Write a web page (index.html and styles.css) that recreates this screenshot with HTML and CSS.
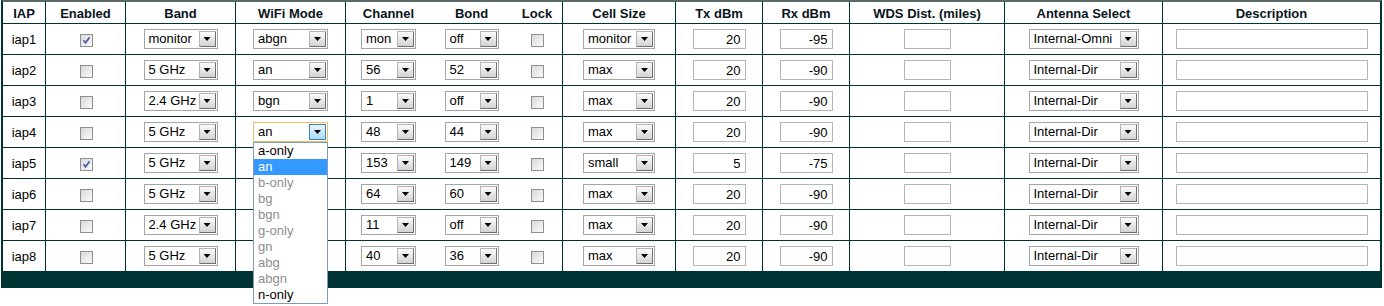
FILE: index.html
```html
<!DOCTYPE html>
<html>

<head>
    <title>IAP Settings</title>
    <meta http-equiv="Content-Type" content="text/html; charset=utf-8">
    <link rel="stylesheet" href="styles.css">
</head>

<body>
    <div class="panel">
        <table class="iaps">
            <thead>
                <tr>
                    <th class="c-iap">IAP</th>
                    <th class="c-en">Enabled</th>
                    <th class="c-band">Band</th>
                    <th class="c-mode">WiFi Mode</th>
                    <th class="c-chan nb">Channel</th>
                    <th class="c-bond nb">Bond</th>
                    <th class="c-lock">Lock</th>
                    <th class="c-cell">Cell Size</th>
                    <th class="c-tx">Tx dBm</th>
                    <th class="c-rx">Rx dBm</th>
                    <th class="c-wds">WDS Dist. (miles)</th>
                    <th class="c-ant">Antenna Select</th>
                    <th class="c-desc nb">Description</th>
                </tr>
            </thead>
            <tbody>
                <tr>
                    <td>iap1</td>
                    <td><span class="chk on"><svg width="11" height="11" viewBox="0 0 11 11"><path d="M2.5 5.2 L4.6 7.8 L8.6 2.2" fill="none" stroke="#4a5ea4" stroke-width="1.8"/></svg></span></td>
                    <td><span class="sel w-band"><span class="val">monitor</span><span class="btn"></span></span></td>
                    <td><span class="sel w-mode"><span class="val">abgn</span><span class="btn"></span></span></td>
                    <td class="nb"><span class="sel w-chan"><span class="val">mon</span><span class="btn"></span></span></td>
                    <td class="nb"><span class="sel w-bond"><span class="val">off</span><span class="btn"></span></span></td>
                    <td><span class="chk"></span></td>
                    <td><span class="sel w-cell"><span class="val">monitor</span><span class="btn"></span></span></td>
                    <td><input class="num" type="text" value="20"></td>
                    <td><input class="num" type="text" value="-95"></td>
                    <td><input class="wds" type="text" value=""></td>
                    <td><span class="sel w-ant"><span class="val">Internal-Omni</span><span class="btn"></span></span></td>
                    <td class="nb"><input class="desc" type="text" value=""></td>
                </tr>
                <tr>
                    <td>iap2</td>
                    <td><span class="chk"></span></td>
                    <td><span class="sel w-band"><span class="val">5 GHz</span><span class="btn"></span></span></td>
                    <td><span class="sel w-mode"><span class="val">an</span><span class="btn"></span></span></td>
                    <td class="nb"><span class="sel w-chan"><span class="val">56</span><span class="btn"></span></span></td>
                    <td class="nb"><span class="sel w-bond"><span class="val">52</span><span class="btn"></span></span></td>
                    <td><span class="chk"></span></td>
                    <td><span class="sel w-cell"><span class="val">max</span><span class="btn"></span></span></td>
                    <td><input class="num" type="text" value="20"></td>
                    <td><input class="num" type="text" value="-90"></td>
                    <td><input class="wds" type="text" value=""></td>
                    <td><span class="sel w-ant"><span class="val">Internal-Dir</span><span class="btn"></span></span></td>
                    <td class="nb"><input class="desc" type="text" value=""></td>
                </tr>
                <tr>
                    <td>iap3</td>
                    <td><span class="chk"></span></td>
                    <td><span class="sel w-band"><span class="val">2.4 GHz</span><span class="btn"></span></span></td>
                    <td><span class="sel w-mode"><span class="val">bgn</span><span class="btn"></span></span></td>
                    <td class="nb"><span class="sel w-chan"><span class="val">1</span><span class="btn"></span></span></td>
                    <td class="nb"><span class="sel w-bond"><span class="val">off</span><span class="btn"></span></span></td>
                    <td><span class="chk"></span></td>
                    <td><span class="sel w-cell"><span class="val">max</span><span class="btn"></span></span></td>
                    <td><input class="num" type="text" value="20"></td>
                    <td><input class="num" type="text" value="-90"></td>
                    <td><input class="wds" type="text" value=""></td>
                    <td><span class="sel w-ant"><span class="val">Internal-Dir</span><span class="btn"></span></span></td>
                    <td class="nb"><input class="desc" type="text" value=""></td>
                </tr>
                <tr>
                    <td>iap4</td>
                    <td><span class="chk"></span></td>
                    <td><span class="sel w-band"><span class="val">5 GHz</span><span class="btn"></span></span></td>
                    <td>
                        <span class="sel w-mode open"><span class="val">an</span><span class="btn"></span>
                            <span class="list">
                                <span class="opt">a-only</span>
                                <span class="opt hl">an</span>
                                <span class="opt dis">b-only</span>
                                <span class="opt dis">bg</span>
                                <span class="opt dis">bgn</span>
                                <span class="opt dis">g-only</span>
                                <span class="opt dis">gn</span>
                                <span class="opt dis">abg</span>
                                <span class="opt dis">abgn</span>
                                <span class="opt">n-only</span>
                            </span>
                        </span>
                    </td>
                    <td class="nb"><span class="sel w-chan"><span class="val">48</span><span class="btn"></span></span></td>
                    <td class="nb"><span class="sel w-bond"><span class="val">44</span><span class="btn"></span></span></td>
                    <td><span class="chk"></span></td>
                    <td><span class="sel w-cell"><span class="val">max</span><span class="btn"></span></span></td>
                    <td><input class="num" type="text" value="20"></td>
                    <td><input class="num" type="text" value="-90"></td>
                    <td><input class="wds" type="text" value=""></td>
                    <td><span class="sel w-ant"><span class="val">Internal-Dir</span><span class="btn"></span></span></td>
                    <td class="nb"><input class="desc" type="text" value=""></td>
                </tr>
                <tr>
                    <td>iap5</td>
                    <td><span class="chk on"><svg width="11" height="11" viewBox="0 0 11 11"><path d="M2.5 5.2 L4.6 7.8 L8.6 2.2" fill="none" stroke="#4a5ea4" stroke-width="1.8"/></svg></span></td>
                    <td><span class="sel w-band"><span class="val">5 GHz</span><span class="btn"></span></span></td>
                    <td><span class="sel w-mode"><span class="val"></span><span class="btn"></span></span></td>
                    <td class="nb"><span class="sel w-chan"><span class="val">153</span><span class="btn"></span></span></td>
                    <td class="nb"><span class="sel w-bond"><span class="val">149</span><span class="btn"></span></span></td>
                    <td><span class="chk"></span></td>
                    <td><span class="sel w-cell"><span class="val">small</span><span class="btn"></span></span></td>
                    <td><input class="num" type="text" value="5"></td>
                    <td><input class="num" type="text" value="-75"></td>
                    <td><input class="wds" type="text" value=""></td>
                    <td><span class="sel w-ant"><span class="val">Internal-Dir</span><span class="btn"></span></span></td>
                    <td class="nb"><input class="desc" type="text" value=""></td>
                </tr>
                <tr>
                    <td>iap6</td>
                    <td><span class="chk"></span></td>
                    <td><span class="sel w-band"><span class="val">5 GHz</span><span class="btn"></span></span></td>
                    <td><span class="sel w-mode"><span class="val"></span><span class="btn"></span></span></td>
                    <td class="nb"><span class="sel w-chan"><span class="val">64</span><span class="btn"></span></span></td>
                    <td class="nb"><span class="sel w-bond"><span class="val">60</span><span class="btn"></span></span></td>
                    <td><span class="chk"></span></td>
                    <td><span class="sel w-cell"><span class="val">max</span><span class="btn"></span></span></td>
                    <td><input class="num" type="text" value="20"></td>
                    <td><input class="num" type="text" value="-90"></td>
                    <td><input class="wds" type="text" value=""></td>
                    <td><span class="sel w-ant"><span class="val">Internal-Dir</span><span class="btn"></span></span></td>
                    <td class="nb"><input class="desc" type="text" value=""></td>
                </tr>
                <tr>
                    <td>iap7</td>
                    <td><span class="chk"></span></td>
                    <td><span class="sel w-band"><span class="val">2.4 GHz</span><span class="btn"></span></span></td>
                    <td><span class="sel w-mode"><span class="val"></span><span class="btn"></span></span></td>
                    <td class="nb"><span class="sel w-chan"><span class="val">11</span><span class="btn"></span></span></td>
                    <td class="nb"><span class="sel w-bond"><span class="val">off</span><span class="btn"></span></span></td>
                    <td><span class="chk"></span></td>
                    <td><span class="sel w-cell"><span class="val">max</span><span class="btn"></span></span></td>
                    <td><input class="num" type="text" value="20"></td>
                    <td><input class="num" type="text" value="-90"></td>
                    <td><input class="wds" type="text" value=""></td>
                    <td><span class="sel w-ant"><span class="val">Internal-Dir</span><span class="btn"></span></span></td>
                    <td class="nb"><input class="desc" type="text" value=""></td>
                </tr>
                <tr>
                    <td>iap8</td>
                    <td><span class="chk"></span></td>
                    <td><span class="sel w-band"><span class="val">5 GHz</span><span class="btn"></span></span></td>
                    <td><span class="sel w-mode"><span class="val"></span><span class="btn"></span></span></td>
                    <td class="nb"><span class="sel w-chan"><span class="val">40</span><span class="btn"></span></span></td>
                    <td class="nb"><span class="sel w-bond"><span class="val">36</span><span class="btn"></span></span></td>
                    <td><span class="chk"></span></td>
                    <td><span class="sel w-cell"><span class="val">max</span><span class="btn"></span></span></td>
                    <td><input class="num" type="text" value="20"></td>
                    <td><input class="num" type="text" value="-90"></td>
                    <td><input class="wds" type="text" value=""></td>
                    <td><span class="sel w-ant"><span class="val">Internal-Dir</span><span class="btn"></span></span></td>
                    <td class="nb"><input class="desc" type="text" value=""></td>
                </tr>
            </tbody>
        </table>
        <div class="foot"></div>
    </div>
</body>

</html>
```

FILE: styles.css
```css
html,
body {
    min-height: 306px;
}

body {
    margin: 0;
    background-color: white;
    color: black;
    font-family: "Liberation Sans", Arial, sans-serif;
    font-size: 13px;
}

.panel {
    width: 1381px;
    margin-left: 1px;
}

.iaps {
    width: 1381px;
    box-sizing: border-box;
    table-layout: fixed;
    border-spacing: 0;
    border-top: 2px solid #5b6868;
    border-left: 2px solid #003333;
    border-right: 2px solid #003333;
}

.iaps th,
.iaps td {
    box-sizing: border-box;
    padding: 0;
    text-align: center;
    vertical-align: middle;
    border-right: 1px solid #003333;
    border-bottom: 1px solid #003333;
    white-space: nowrap;
}

.iaps th {
    height: 22px;
    padding-top: 1px;
    font-weight: bold;
    color: #0a1420;
}

.iaps td {
    height: 31px;
}

.iaps .nb {
    border-right: none;
}

/* column widths, border included */
.c-iap { width: 43px; }
.c-en { width: 80px; }
.c-band { width: 110px; }
.c-mode { width: 110px; }
.c-chan { width: 85px; }
.c-bond { width: 81px; }
.c-lock { width: 51px; }
.c-cell { width: 113px; }
.c-tx { width: 87px; }
.c-rx { width: 87px; }
.c-wds { width: 155px; }
.c-ant { width: 158px; }
.c-desc { width: 217px; }

.foot {
    height: 16px;
    background-color: #003333;
}

/* fake select boxes */
.sel {
    position: relative;
    display: inline-flex;
    align-items: center;
    height: 20px;
    box-sizing: border-box;
    border: 1px solid #a5a5a5;
    background-color: white;
    vertical-align: middle;
    text-align: left;
}

.sel .val {
    flex: 1;
    padding-left: 4px;
    line-height: 18px;
    height: 18px;
    overflow: hidden;
}

.sel .btn {
    display: flex;
    align-items: center;
    justify-content: center;
    width: 17px;
    height: 16px;
    margin-right: 1px;
    box-sizing: border-box;
    border: 1px solid;
    border-color: #b4b4b4 #707070 #707070 #b4b4b4;
    background: linear-gradient(#fbfbfb, #d3d3d3);
}

.sel .btn::after {
    content: "";
    width: 7px;
    height: 4px;
    background-color: black;
    clip-path: polygon(0 0, 100% 0, 50% 100%);
}

.w-band { width: 74px; }
.w-mode { width: 75px; }
.w-chan { width: 55px; }
.w-bond { width: 54px; }
.w-cell { width: 72px; }
.w-ant { width: 110px; }

.sel.open {
    border-color: #e5c365;
}

.sel.open .btn {
    border-color: #3c7fb1;
    background: linear-gradient(#eaf6fd, #a9daf5);
}

.list {
    position: absolute;
    z-index: 10;
    top: calc(100% + 1px);
    left: -1px;
    width: 75px;
    box-sizing: border-box;
    border: 1px solid #7f9db9;
    background-color: white;
}

.opt {
    display: block;
    height: 16px;
    line-height: 16px;
    padding-left: 4px;
}

.opt.dis {
    color: #8d8d8d;
}

.opt.hl {
    background-color: #3399ff;
    color: white;
}

/* checkboxes */
.chk {
    display: inline-block;
    width: 13px;
    height: 13px;
    box-sizing: border-box;
    border: 1px solid #8e8f8f;
    background: linear-gradient(135deg, #d8d8d8, #fbfbfb);
    vertical-align: middle;
    margin-left: 1px;
}

.chk svg {
    display: block;
}

/* text inputs */
.num,
.wds,
.desc {
    height: 20px;
    box-sizing: border-box;
    border: 1px solid #b5b5b5;
    padding: 0 4px;
    margin: 0;
    font-family: "Liberation Sans", Arial, sans-serif;
    font-size: 13px;
    color: black;
    background-color: white;
    vertical-align: middle;
    outline: none;
}

.num {
    width: 53px;
    text-align: right;
}

.wds {
    width: 47px;
}

.desc {
    width: 192px;
}
```
